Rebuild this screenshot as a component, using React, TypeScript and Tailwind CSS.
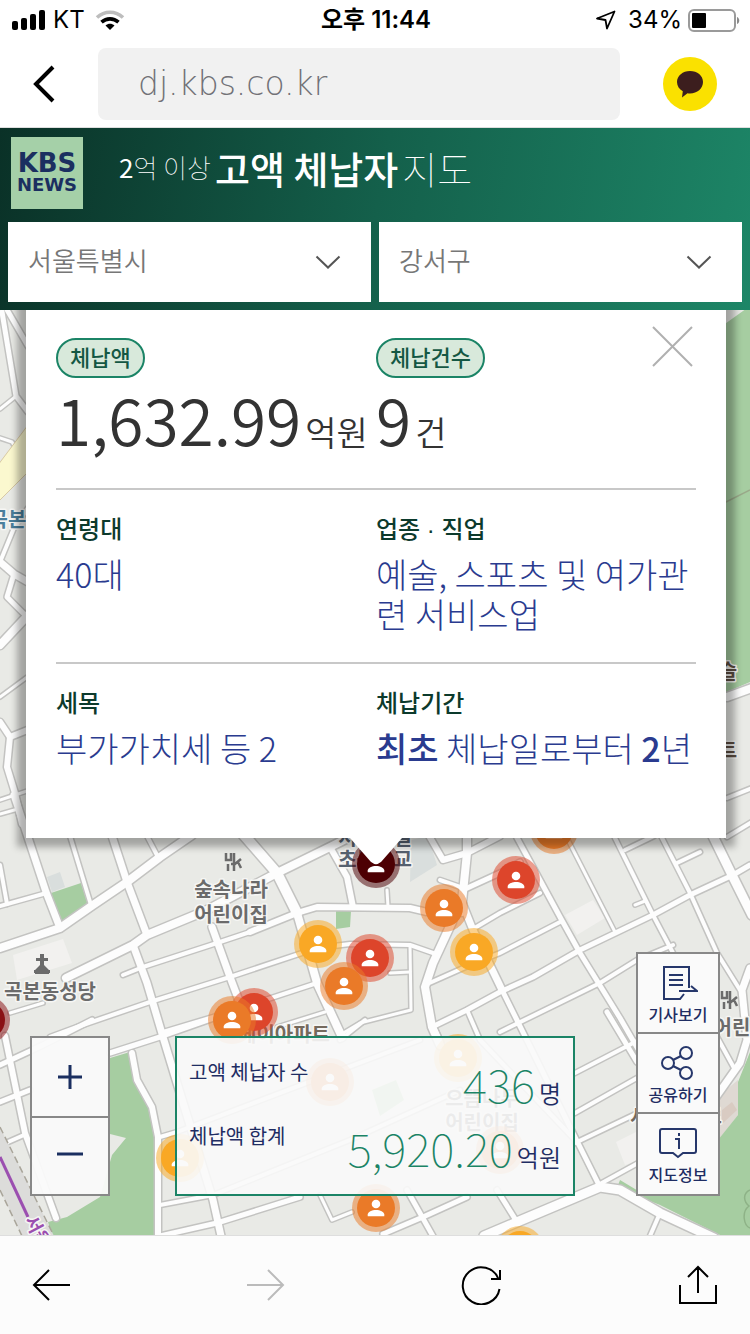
import type { ReactNode } from "react";

const FONT = "font-['Noto_Sans_CJK_KR','Liberation_Sans',sans-serif]";

// [stroke width, points] of every street on the map
const ROADS: [number, string][] = [
  // west strip
  [6, "2,312 16,396 28,412"],
  [6, "6,308 28,346"],
  [4, "0,409 15,397"],
  [4, "0,438 12,442 28,470"],
  [5, "28,508 14,528 0,562"],
  [8, "0,562 14,574 28,582"],
  [6, "14,574 7,597 28,618"],
  [9, "0,645 30,613"],
  [4, "0,697 30,675"],
  [7, "0,722 10,737 30,729"],
  [7, "10,737 7,767 15,793 22,824"],
  [4, "0,800 30,790"],
  // north west blocks
  [4, "0,814 18,809"],
  [8, "14,795 46,892 60,928"],
  [9, "0,948 60,928 93,905 127,882 160,857 192,835"],
  [5, "0,906 43,894"],
  [5, "0,865 7,904"],
  [5, "70,836 91,905"],
  [8, "112,836 127,882 147,935"],
  [5, "147,836 158,857"],
  [9, "66,978 133,945 147,935 205,911 277,873 330,847 356,834"],
  [8, "133,945 147,983 163,1037 177,1083 213,1200 221,1236"],
  [5, "123,975 143,967 217,943 250,932"],
  [8, "212,927 230,977 250,1030"],
  [4, "10,1013 43,1003"],
  [5, "50,1037 77,1027 150,1002 230,977 317,948 350,944 410,945 433,953"],
  [5, "163,1032 213,1017 317,983"],
  [5, "245,836 262,852 277,873"],
  [11, "236,826 277,873 297,913"],
  [9, "297,913 317,983 342,1037"],
  [7, "250,932 297,913 317,907 410,908 427,912"],
  [7, "330,847 347,877 353,907"],
  [4, "387,890 388,907"],
  [4, "410,945 411,1010 360,1023 340,1035"],
  [4, "390,973 410,972"],
  [4, "277,1027 325,1012"],
  // centre
  [7, "428,834 443,860 467,853 500,836"],
  [9, "467,834 467,853 461,912"],
  [5, "440,880 463,888"],
  [6, "463,890 500,873 520,862"],
  [8, "461,900 473,930 502,990"],
  [5, "473,929 500,913 540,893"],
  [9, "452,922 433,963 425,987 432,1027 440,1045"],
  [5, "425,985 470,965 500,953 560,922"],
  [6, "432,1027 467,1010 500,992 533,977 580,950 653,915 690,895 733,875 750,865"],
  [5, "467,1010 480,1040 575,1140"],
  [6, "515,834 560,917 580,953 620,1018 650,1070"],
  [4, "566,836 615,932"],
  [5, "613,834 653,915 673,953"],
  [5, "660,834 690,893 717,953 740,990"],
  [10, "710,830 733,877 752,915"],
  [5, "625,850 654,836"],
  [5, "677,863 700,852"],
  [5, "727,798 752,788"],
  [5, "727,837 752,822"],
  [9, "727,697 752,688"],
  [4, "635,905 645,901"],
  // east
  [5, "500,1032 600,983 637,960 673,945"],
  [5, "575,1073 637,1041 660,1030"],
  [5, "575,1113 637,1078 660,1068"],
  [5, "575,1143 640,1112"],
  [6, "607,1012 637,1062"],
  [6, "502,990 575,1137 600,1187"],
  [8, "750,968 742,990 747,1040 740,1063 716,1097"],
  [5, "716,1035 734,1068"],
  // south
  [10, "484,1236 517,1222 600,1187 620,1190 660,1213 714,1238"],
  [5, "600,1184 640,1162"],
  [5, "660,1213 650,1236"],
  [6, "497,1190 517,1222"],
  [6, "407,1190 434,1238"],
  [6, "383,1234 423,1217 467,1197"],
  [4, "320,1195 332,1220 352,1212"],
  [5, "430,1018 441,1042"],
  [5, "340,1040 365,1020"],
  [6, "0,1065 43,1045 92,1020"],
  [6, "0,1102 30,1090"],
  [7, "5,1036 25,1133 56,1218"],
  [5, "8,1142 24,1135"],
  [6, "110,1053 160,1037 214,1018"],
  [7, "132,1053 137,1080 152,1107 158,1137 158,1238"],
  [5, "160,1137 177,1132 420,1040"],
  [5, "160,1205 213,1195 350,1140 460,1090"],
  [6, "160,1236 217,1223 300,1197"],
];

const COLORS = {
  yellow: "#f9a825",
  orange: "#ea7a28",
  red: "#dd452b",
  crimson: "#8a1014",
  maroon: "#4d0003",
};

const PINS: { x: number; y: number; tone: keyof typeof COLORS }[] = [
  { x: 554, y: 830, tone: "orange" },
  { x: 376, y: 864, tone: "maroon" },
  { x: 516, y: 880, tone: "red" },
  { x: 444, y: 908, tone: "orange" },
  { x: 318, y: 944, tone: "yellow" },
  { x: 474, y: 952, tone: "yellow" },
  { x: 370, y: 958, tone: "red" },
  { x: 344, y: 986, tone: "orange" },
  { x: 254, y: 1012, tone: "red" },
  { x: 232, y: 1020, tone: "orange" },
  { x: -14, y: 1020, tone: "crimson" },
  { x: 458, y: 1058, tone: "yellow" },
  { x: 330, y: 1082, tone: "orange" },
  { x: 500, y: 1150, tone: "orange" },
  { x: 180, y: 1158, tone: "yellow" },
  { x: 376, y: 1208, tone: "orange" },
  { x: 520, y: 1250, tone: "yellow" },
];

const PLACES: { x: number; y: number; text: string; fill: string }[] = [
  { x: 231, y: 897, text: "숲속나라", fill: "#6b6b6b" },
  { x: 231, y: 922, text: "어린이집", fill: "#6b6b6b" },
  { x: 50, y: 999, text: "곡본동성당", fill: "#6b6b6b" },
  { x: 375, y: 845, text: "서울화일", fill: "#56616f" },
  { x: 375, y: 867, text: "초등학교", fill: "#56616f" },
  { x: 284, y: 1042, text: "메이아파트", fill: "#74695c" },
  { x: 482, y: 1106, text: "으뜸나무", fill: "#6b6b6b" },
  { x: 482, y: 1130, text: "어린이집", fill: "#6b6b6b" },
  { x: 732, y: 1035, text: "어린", fill: "#6b6b6b" },
  { x: 676, y: 1124, text: "서울아파트", fill: "#74695c" },
  { x: 8, y: 527, text: "곡본", fill: "#4a7f9c" },
  { x: 728, y: 679, text: "슬", fill: "#5f4f43" },
  { x: 728, y: 758, text: "트", fill: "#5f4f43" },
];

function Pin({ x, y, tone }: { x: number; y: number; tone: keyof typeof COLORS }) {
  return (
    <g transform={`translate(${x} ${y})`}>
      <circle r="24" fill={COLORS[tone]} opacity="0.52" />
      <circle r="19" fill={COLORS[tone]} />
      <circle cy="-4" r="4.3" fill="#fff" />
      <path d="M-8.3 8.3V6.6C-8.3 3.6-4 1.9 0 1.9s8.3 1.7 8.3 4.7v1.7z" fill="#fff" />
    </g>
  );
}

function StreetMap() {
  return (
    <svg
      className="absolute inset-0 h-full w-full"
      viewBox="0 310 750 925"
      preserveAspectRatio="xMidYMin slice"
      aria-hidden="true"
    >
      <rect y="310" width="750" height="925" fill="#e9eae6" />
      <path d="M13 955L63 939 72 963 17 980z" fill="#f2f1ef" />
      <path d="M47 877L60 872 65 887 52 892z" fill="#d9dedd" />
      <path d="M411 840L428 836 437 865 410 882z" fill="#d9dedd" />
      <path d="M565 915L593 900 605 918 577 935z" fill="#f2f1ef" />
      <path d="M616 1142L640 1130 640 1160 625 1165z" fill="#f2f1ef" />
      <path d="M720 1095L738 1080V1115L720 1138z" fill="#dfd9d3" />
      <path d="M722 1110L732 1102 737 1110 722 1124z" fill="#d9cbc2" />
      <g fill="#a6cda1">
        <path d="M722 326L750 306V682L722 694z" />
        <path d="M51 893L81 883 88 905 62 924z" />
        <path d="M336 911H351L350 927 336 929z" />
        <path d="M372 1090L396 1080 404 1100 380 1116z" />
        <path d="M630 1045L640 1040V1062z" />
        <path d="M110 1058L130 1052 135 1080 148 1107 154 1137 156 1236H52L48 1222 67 1217 100 1197 112 1155 126 1138 110 1134z" />
        <path d="M750 1052L738 1082V1115L718 1140V1192H640L620 1180 617 1188 660 1205 722 1236H750z" />
      </g>
      <path d="M724 503L750 490" stroke="#9aa98a" strokeWidth="1.5" />
      <path d="M750 1190c-8 4-6 12-1 16-8 6-5 20 1 22" fill="none" stroke="#8eb287" strokeWidth="1.5" />
      <g fill="none" stroke="#c3c3c1" strokeLinejoin="round" strokeLinecap="round">
        {ROADS.map(([w, points]) => (
          <polyline key={points} points={points} strokeWidth={w + 2} />
        ))}
      </g>
      <g fill="none" stroke="#fdfdfd" strokeLinejoin="round" strokeLinecap="round">
        {ROADS.map(([w, points]) => (
          <polyline key={points} points={points} strokeWidth={w - 1} />
        ))}
      </g>
      <path d="M-2 465L28 425V472L-2 502z" fill="#fbf8cf" stroke="#d8c9a4" strokeWidth="1" />
      <path d="M0 1127L54 1236H22L0 1190z" fill="#dcdcda" />
      <path d="M0 1127L54 1236M0 1190L22 1236" stroke="#a9a59a" strokeWidth="1.5" strokeDasharray="7 4" />
      <path d="M0 1157L28 1217" stroke="#9b4fb0" strokeWidth="3" />
      <g
        className={FONT}
        fontSize="20"
        fontWeight="700"
        textAnchor="middle"
        stroke="#f6f6f4"
        strokeWidth="3"
        paintOrder="stroke"
        strokeLinejoin="round"
      >
        {PLACES.map((p) => (
          <text key={`${p.x}-${p.y}`} x={p.x} y={p.y} fill={p.fill}>
            {p.text}
          </text>
        ))}
        <text transform="translate(24 1220) rotate(62)" textAnchor="start" fontSize="18" fill="#9b4fb0">
          서울
        </text>
      </g>
      <g fill="none" stroke="#6b6b6b" strokeWidth="2.5">
        <path d="M226 853v7h5v-7M234 853v18M228 864v7M231 864h4l6-5M238 862l3 6" />
        <path d="M722 991v7h5v-7M730 991v18M724 1002v7M727 1002h4l6-5M734 1000l3 6" />
      </g>
      <path d="M40 954h4v4h4v3h-4v4l5 5v4H35v-4l5-5v-4h-4v-3h4zM34 970h16v3H34z" fill="#6b6b6b" />
      {PINS.map((p) => (
        <Pin key={`${p.x}-${p.y}`} {...p} />
      ))}
    </svg>
  );
}

function StatusBar() {
  return (
    <div className="grid h-10 grid-cols-[1fr_auto_1fr] items-center pr-2.5 pl-3 font-['Inter','Noto_Sans_CJK_KR',sans-serif] text-2xl text-black">
      <div className="flex items-center gap-2">
        <svg width="33" height="20" viewBox="0 0 33 20" aria-hidden="true">
          <rect y="11" width="6" height="9" rx="2" />
          <rect x="9" y="8" width="6" height="12" rx="2" />
          <rect x="18" y="4" width="6" height="16" rx="2" />
          <rect x="27" width="6" height="20" rx="2" />
        </svg>
        <span>KT</span>
        <svg className="ml-0.5" width="30" height="20" viewBox="0 0 30 20" fill="none" aria-hidden="true">
          <path d="M2 7.5C9.5 0.5 20.5 0.5 28 7.5" stroke="#bdbdbd" strokeWidth="3.6" />
          <path d="M6.5 12.2c5-4.5 12-4.5 17 0" stroke="#000" strokeWidth="3.6" />
          <path d="M10.5 15.5c2.7-2.3 6.3-2.3 9 0L15 20z" fill="#000" />
        </svg>
      </div>
      <span className="font-semibold">오후 11:44</span>
      <div className="flex items-center justify-end">
        <svg className="mr-3" width="20" height="20" viewBox="0 0 20 20" fill="none" stroke="#000" strokeWidth="1.8" strokeLinejoin="round" aria-hidden="true">
          <path d="M1 8.5L18.5 1.5 11 18.5 9.500 10z" />
        </svg>
        <span>34%</span>
        <svg className="ml-1.5" width="52" height="23" viewBox="0 0 52 23" aria-hidden="true">
          <rect x="1" y="1" width="46" height="21" rx="5" fill="none" stroke="#9a9a9a" strokeWidth="2" />
          <rect x="4" y="4" width="14" height="15" rx="1" />
          <path d="M49 8c3 1 3 6 0 7z" fill="#8a8a8a" />
        </svg>
      </div>
    </div>
  );
}

function AddressBar() {
  return (
    <div className="flex h-22 items-center border-b border-[#dedede] bg-white">
      <button type="button" aria-label="뒤로" className="flex w-[98px] justify-start pl-8">
        <svg width="24" height="38" viewBox="0 0 24 38" fill="none" stroke="#000" strokeWidth="4">
          <path d="M21 2L4 19l17 17" />
        </svg>
      </button>
      <input
        type="text"
        aria-label="주소"
        defaultValue="dj.kbs.co.kr"
        className="h-18 min-w-0 flex-1 rounded-lg bg-[#f1f1f1] px-10 font-['DejaVu_Sans',sans-serif] text-[33px] font-extralight text-[#727277]"
      />
      <button type="button" aria-label="카카오톡" className="mr-[33px] ml-[43px] flex size-[54px] items-center justify-center rounded-full bg-[#fae100]">
        <svg width="28" height="28" viewBox="0 0 28 28" fill="#3c1e1e">
          <path d="M14 1C6.8 1 1 5.800 1 12c0 4 2.3 7.3 5.800 9.300L6 27.500l5.500-4.300c.8.1 1.600.2 2.500.2 7.200 0 13-4.900 13-11.400S21.200 1 14 1z" />
        </svg>
      </button>
    </div>
  );
}

function RegionSelect({ label, value }: { label: string; value: string }) {
  return (
    <div className="relative flex-1">
      <select
        aria-label={label}
        defaultValue={value}
        className="block h-20 w-full appearance-none bg-white px-5 pb-1.5 text-[26px] font-[350] text-[#777]"
      >
        <option>{value}</option>
      </select>
      <svg className="pointer-events-none absolute top-[33px] right-[30px]" width="26" height="14" viewBox="0 0 26 14" fill="none" stroke="#555" strokeWidth="2">
        <path d="M1.5 1.5L13 12.5 24.500 1.500" />
      </svg>
    </div>
  );
}

function Header() {
  return (
    <header className="bg-[linear-gradient(100deg,#0a3127,#14604b_50%,#1d8667)] px-2 pb-2">
      <div className="flex h-[94px] items-center">
        <a
          href="#news"
          aria-label="KBS NEWS"
          className="-mt-1 ml-[3px] flex size-18 flex-col items-center justify-center bg-[#a5d0a8] font-['DejaVu_Sans',sans-serif] font-bold text-[#1b2f60]"
        >
          <span className="text-[26px] leading-6">KBS</span>
          <span className="text-lg leading-5">NEWS</span>
        </a>
        <h1 className="ml-9 pb-4 text-[38px] leading-[50px] text-white">
          <span className="align-[6px] text-[26px]">
            2<span className="font-thin">억 이상</span>
          </span>
          <span className="ml-1 font-medium">고액 체납자</span>
          <span className="ml-1 font-thin">지도</span>
        </h1>
      </div>
      <div className="flex gap-2">
        <RegionSelect label="시도" value="서울특별시" />
        <RegionSelect label="시군구" value="강서구" />
      </div>
    </header>
  );
}

function Figure({ label, value, unit }: { label: string; value: string; unit: string }) {
  return (
    <div>
      <span className="inline-flex h-10 items-center rounded-full border-2 border-[#1b8466] bg-[#d8e9db] px-3 pb-1 text-[22px] font-medium text-[#145743]">
        {label}
      </span>
      <p className="flex h-[110px] items-baseline whitespace-nowrap text-[#333]">
        <span className="text-[64px] leading-[80px] font-[350]">{value}</span>
        <span className="ml-1 text-[34px] font-[350]">{unit}</span>
      </p>
    </div>
  );
}

function Detail({ label, children }: { label: string; children: ReactNode }) {
  return (
    <div className="pt-6">
      <dt className="font-['Liberation_Sans','Noto_Sans_CJK_KR',sans-serif] text-2xl font-medium text-[#0c3a2c]">{label}</dt>
      <dd className="mt-2 text-[34px] leading-10 font-light break-all text-[#2a3b8f]">{children}</dd>
    </div>
  );
}

function DetailCard() {
  return (
    <article className="relative mr-6 ml-[26px] bg-white px-[30px] pt-7 shadow-[0_0_7px_9px_rgba(0,0,0,0.3)]">
      <button type="button" aria-label="닫기" className="absolute top-4 right-[33px]">
        <svg width="41" height="41" viewBox="0 0 41 41" stroke="#b0b0b0" strokeWidth="2">
          <path d="M1 1l39 39M40 1L1 40" />
        </svg>
      </button>
      <div className="grid grid-cols-2">
        <Figure label="체납액" value="1,632.99" unit="억원" />
        <Figure label="체납건수" value="9" unit="건" />
      </div>
      <dl>
        <div className="grid grid-cols-2 border-t-2 border-[#c8c8c8] pb-7">
          <Detail label="연령대">40대</Detail>
          <Detail label="업종 · 직업">예술, 스포츠 및 여가관련 서비스업</Detail>
        </div>
        <div className="grid grid-cols-2 border-t-2 border-[#c8c8c8] pb-[70px]">
          <Detail label="세목">부가가치세 등 2</Detail>
          <Detail label="체납기간">
            <b className="font-medium">최초</b> 체납일로부터 <b className="font-medium">2</b>년
          </Detail>
        </div>
      </dl>
      <svg className="absolute top-full left-1/2 -translate-x-1/2" width="52" height="26" viewBox="0 0 52 26" fill="#fff" aria-hidden="true">
        <path d="M0 0h52L31 24q-5 3-10 0z" />
      </svg>
    </article>
  );
}

function SummaryRow({ label, value, unit }: { label: string; value: string; unit: string }) {
  return (
    <div className="flex h-16 items-start justify-between text-[#1f2d63]">
      <dt className="pt-2.5 text-xl leading-6">{label}</dt>
      <dd className="flex items-baseline pt-1">
        <span className="text-[46px] leading-[58px] font-thin text-[#1b8466]">{value}</span>
        <span className="ml-1 text-2xl font-[350]">{unit}</span>
      </dd>
    </div>
  );
}

function SideButton({ label, children }: { label: string; children: ReactNode }) {
  return (
    <button type="button" className="flex h-20 w-full flex-col items-center gap-0.5 pt-3 text-base leading-6 font-medium text-[#1f2d63]">
      <svg width="40" height="34" viewBox="0 0 40 34" fill="none" stroke="#26376b" strokeWidth="2" aria-hidden="true">
        {children}
      </svg>
      {label}
    </button>
  );
}

function MapControls() {
  return (
    <div className="absolute inset-x-[30px] bottom-[39px] flex items-end">
      <div className="w-20 divide-y-2 divide-[#888] border-2 border-[#888] bg-[#fafafa]/95">
        <button type="button" aria-label="확대" className="flex h-20 w-full items-center justify-center">
          <svg width="26" height="26" viewBox="0 0 26 26" stroke="#1b2f60" strokeWidth="3">
            <path d="M1 13h24M13 1v24" />
          </svg>
        </button>
        <button type="button" aria-label="축소" className="flex h-19 w-full items-center justify-center">
          <svg width="26" height="26" viewBox="0 0 26 26" stroke="#1b2f60" strokeWidth="3">
            <path d="M0 11h26" />
          </svg>
        </button>
      </div>
      <dl className="mr-[61px] ml-[65px] h-40 flex-1 border-2 border-[#1b8466] bg-[#fafafa]/90 px-3 pt-3">
        <SummaryRow label="고액 체납자 수" value="436" unit="명" />
        <SummaryRow label="체납액 합계" value="5,920.20" unit="억원" />
      </dl>
      <div className="w-21 divide-y-2 divide-[#888] border-2 border-[#888] bg-[#fafafa]">
        <SideButton label="기사보기">
          <path d="M31 22V1H6v32h16l4-5M11 9h14M11 14h14M11 19h14M21 25h18l-6-5" />
        </SideButton>
        <SideButton label="공유하기">
          <circle cx="10" cy="17" r="6" />
          <circle cx="28" cy="7" r="6" />
          <circle cx="28" cy="27" r="6" />
          <path d="M15 14l8-4M15 20l8 4" />
        </SideButton>
        <SideButton label="지도정보">
          <path d="M4 3h32q2 0 2 2v20q0 2-2 2H25l-5 4-5-4H4q-2 0-2-2V5q0-2 2-2z" />
          <path d="M17 13h4v10M21 7v3" />
        </SideButton>
      </div>
    </div>
  );
}

function BottomBar() {
  return (
    <nav className="flex h-[99px] items-center justify-between border-t border-[#dedede] bg-[#fcfcfc] px-8">
      <button type="button" aria-label="이전 페이지">
        <svg width="38" height="34" viewBox="0 0 38 34" fill="none" stroke="#000" strokeWidth="2">
          <path d="M38 17H2M17 2L2 17l15 15" />
        </svg>
      </button>
      <button type="button" aria-label="다음 페이지" disabled>
        <svg width="38" height="34" viewBox="0 0 38 34" fill="none" stroke="#bbb" strokeWidth="2">
          <path d="M0 17h36M21 2l15 15-15 15" />
        </svg>
      </button>
      <button type="button" aria-label="새로고침">
        <svg width="40" height="40" viewBox="0 0 40 40" fill="none" stroke="#000" strokeWidth="2">
          <path d="M38.500 24A18.500 18.500 0 1 1 37.500 14M39 5v9H30" />
        </svg>
      </button>
      <button type="button" aria-label="공유">
        <svg width="40" height="40" viewBox="0 0 40 40" fill="none" stroke="#000" strokeWidth="2">
          <path d="M2 20v18h36V20M20 28V2M10 12L20 2l10 10" />
        </svg>
      </button>
    </nav>
  );
}

export default function App() {
  return (
    <div className={`flex min-h-screen flex-col bg-white ${FONT}`}>
      <StatusBar />
      <AddressBar />
      <Header />
      <main className="relative flex-1 overflow-hidden pb-[397px]">
        <StreetMap />
        <DetailCard />
        <MapControls />
      </main>
      <BottomBar />
    </div>
  );
}
